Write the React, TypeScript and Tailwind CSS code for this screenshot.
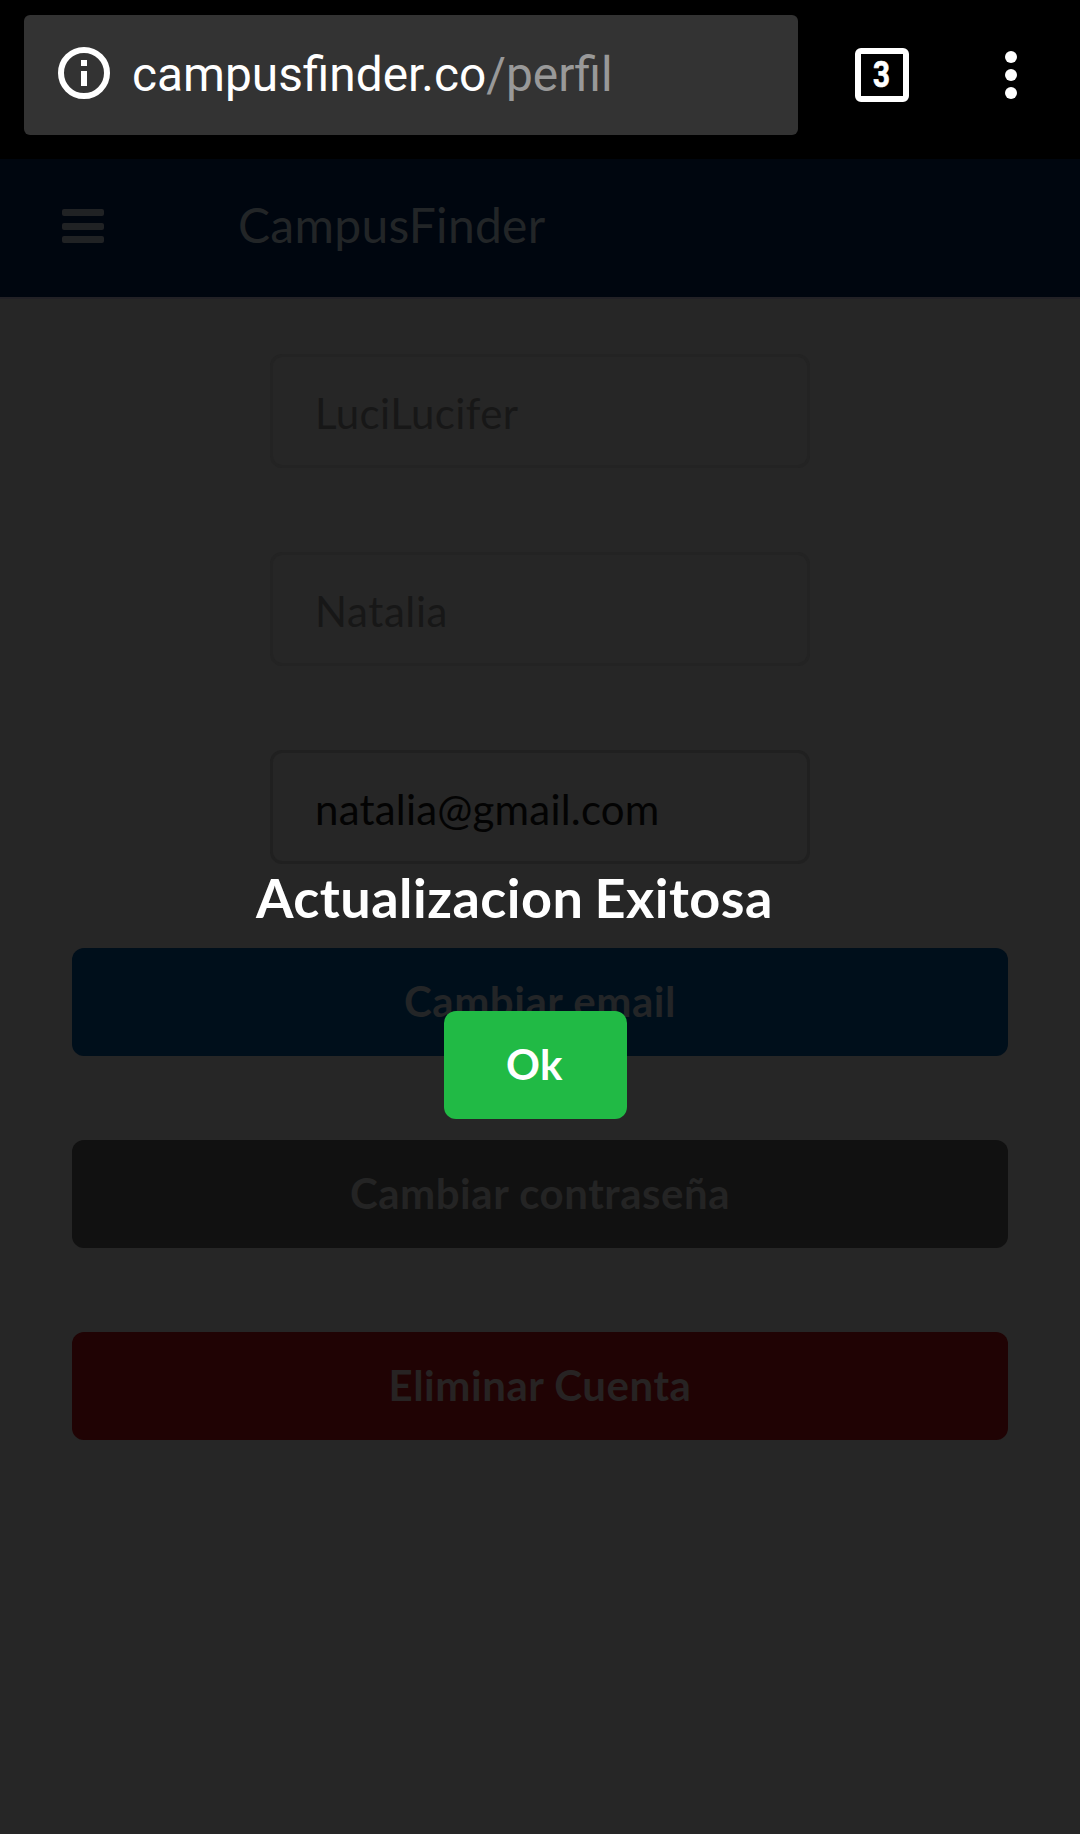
import React from "react";

function InfoIcon() {
  return (
    <svg width="52" height="52" viewBox="0 0 52 52" fill="none" aria-hidden="true">
      <circle cx="26" cy="26" r="23" stroke="#fff" strokeWidth="6" />
      <path d="M23 13h6v6h-6zM23 24h6v15h-6z" fill="#fff" />
    </svg>
  );
}

function BrowserBar() {
  return (
    <div className="flex h-[159px] items-start bg-black pt-[15px] pl-6 font-['Roboto',sans-serif]">
      <div className="flex h-[120px] w-[774px] items-center rounded-md bg-[#333333] pl-[34px]">
        <div className="-mt-1">
          <InfoIcon />
        </div>
        <p className="ml-[22px] origin-left scale-x-[0.996] text-[48px] leading-[56px] whitespace-nowrap text-white">
          campusfinder.co<span className="text-[#999999]">/perfil</span>
        </p>
      </div>
      <div className="mt-[33px] ml-[57px] flex size-[54px] items-center justify-center rounded-md border-6 border-white">
        <span className="scale-x-[0.8] text-[37px] leading-[42px] font-bold text-white [-webkit-text-stroke:0.7px_white]">
          3
        </span>
      </div>
      <div className="mt-9 ml-24 flex flex-col gap-1.5">
        <span className="size-3 rounded-full bg-white" />
        <span className="size-3 rounded-full bg-white" />
        <span className="size-3 rounded-full bg-white" />
      </div>
    </div>
  );
}

function NavBar() {
  return (
    <header className="flex h-[140px] items-start border-b-2 border-[#222126] bg-[#00060f] pl-[62px]">
      <div className="mt-[50px] flex w-[42px] flex-col gap-[6.5px]">
        <span className="h-[7px] rounded-xs bg-[#202224]" />
        <span className="h-[7px] rounded-xs bg-[#202224]" />
        <span className="h-[7px] rounded-xs bg-[#202224]" />
      </div>
      <h1 className="mt-[36px] ml-[134px] text-[48px] leading-[60px] tracking-[0.27px] text-[#222527]">CampusFinder</h1>
    </header>
  );
}

function Field({ value, className }: { value: string; className: string }) {
  return (
    <div className={`flex h-[114px] w-[540px] items-center rounded-xl border-3 pl-[42px] ${className}`}>
      <span className="pt-1 text-[42px] leading-[50px]">{value}</span>
    </div>
  );
}

export default function App() {
  return (
    <div className="relative h-[1834px] w-[1080px] overflow-hidden bg-[#262626] font-['Lato',sans-serif]">
      <BrowserBar />
      <NavBar />
      <main className="flex flex-col items-center px-[72px] pt-[55px]">
        <div className="flex flex-col gap-21">
          <Field value="LuciLucifer" className="border-[#232323] tracking-[0.4px] text-[#171717]" />
          <Field value="Natalia" className="border-[#232323] tracking-[0.6px] text-[#171717]" />
          <Field value="natalia@gmail.com" className="border-[#202020] tracking-[0.2px] text-[#030303]" />
        </div>
        <div className="mt-21 flex w-full flex-col gap-21 text-[42px] leading-[42px] font-bold tracking-[0.53px] [word-spacing:-1.5px]">
          <button className="h-[108px] rounded-xl bg-[#000f1b] pb-0.5 text-[#232527]">Cambiar email</button>
          <button className="h-[108px] rounded-xl bg-[#111111] pb-0.5 text-[#242424]">Cambiar contraseña</button>
          <button className="h-[108px] rounded-xl bg-[#200304] pb-0.5 text-[#272323]">Eliminar Cuenta</button>
        </div>
      </main>
      <div role="dialog" className="absolute top-[863px] left-[256px] flex w-[560px] flex-col text-white">
        <h2 className="text-[54px] leading-[69px] font-bold tracking-[0.47px] whitespace-nowrap [word-spacing:-2.5px]">
          Actualizacion Exitosa
        </h2>
        <button className="mt-[79px] ml-[188px] h-[108px] w-[183px] rounded-xl bg-[#21ba45] pr-0.5 pb-0.5 text-[42px] leading-[42px] font-bold tracking-[0.42px]">
          Ok
        </button>
      </div>
    </div>
  );
}
